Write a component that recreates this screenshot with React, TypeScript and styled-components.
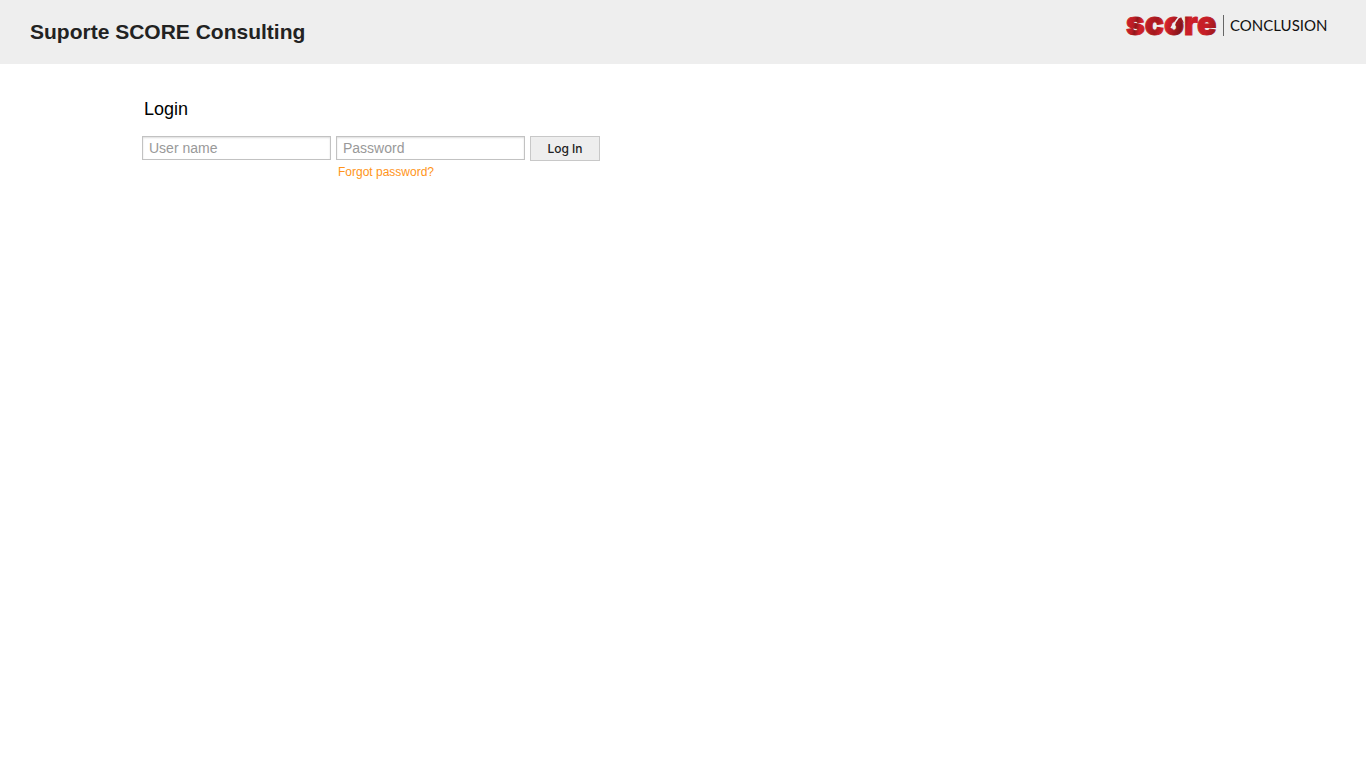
import React from "react";
import styled, { createGlobalStyle } from "styled-components";

const GlobalStyle = createGlobalStyle`
  * {
    box-sizing: border-box;
  }
  body {
    margin: 0;
    background: #fff;
    color: #000;
    font-family: "Liberation Sans", Arial, sans-serif;
  }
`;

const Header = styled.header`
  display: flex;
  justify-content: space-between;
  align-items: flex-start;
  height: 64px;
  padding: 0 36px 0 30px;
  background: #eee;
`;

const Title = styled.h1`
  margin: 0;
  padding-top: 18px;
  font-size: 21px;
  line-height: 28px;
  color: #222;
`;

const Logo = styled.svg`
  display: block;
  flex: none;
`;

const Main = styled.main`
  max-width: 1082px;
  margin: 0 auto;
  padding-top: 32px;
`;

const Heading = styled.h2`
  margin: 0 0 14px 2px;
  font-size: 18px;
  line-height: 26px;
  font-weight: 400;
`;

const Form = styled.form`
  display: flex;
  align-items: flex-start;
  gap: 5px;
`;

const Field = styled.div`
  display: flex;
  flex-direction: column;
  align-items: flex-start;
  gap: 4px;
`;

const TextInput = styled.input`
  width: 189px;
  height: 24px;
  padding: 0 6px;
  border: 1px solid #c2c2c2;
  border-radius: 0;
  background: #fff;
  box-shadow: inset 0 1px 2px #ddd;
  font: 14px "Liberation Sans", Arial, sans-serif;
  &::placeholder {
    color: #999;
    opacity: 1;
  }
`;

const ForgotLink = styled.a`
  margin-left: 2px;
  font-size: 12px;
  line-height: 16px;
  color: #ff9419;
  text-decoration: none;
`;

const SubmitButton = styled.button`
  width: 70px;
  height: 25px;
  padding: 0;
  border: 1px solid #c8c8c8;
  border-radius: 0;
  background: #eee;
  color: #222;
  font: 500 12px Inter, sans-serif;
`;

function ScoreLogo() {
  return (
    <Logo width="206" height="48" viewBox="0 0 206 48" role="img" aria-label="Score Conclusion">
      <defs>
        <linearGradient id="red" gradientUnits="userSpaceOnUse" x1="2" y1="15" x2="92" y2="35">
          <stop offset="0" stopColor="#d71f2b" />
          <stop offset="0.1" stopColor="#b81c24" />
          <stop offset="0.13" stopColor="#8f171b" />
          <stop offset="0.18" stopColor="#d2202a" />
          <stop offset="0.34" stopColor="#a3191e" />
          <stop offset="0.44" stopColor="#da202c" />
          <stop offset="0.61" stopColor="#84151a" />
          <stop offset="0.68" stopColor="#cc1f29" />
          <stop offset="0.88" stopColor="#c51e27" />
          <stop offset="1" stopColor="#96171c" />
        </linearGradient>
      </defs>
      <text
        x="2"
        y="35"
        fontFamily="Inter, sans-serif"
        fontWeight="900"
        fontSize="32"
        fill="url(#red)"
        stroke="url(#red)"
        strokeWidth="1"
      >
        score
      </text>
      <path d="M47 28 L57 14" stroke="#eee" strokeWidth="1.5" />
      <path d="M51 25 L57 17 L60 23 L57 21 L53 27 Z" fill="#9b181d" />
      <path d="M99.500 15 V36" stroke="#666" strokeWidth="1" />
      <text x="106" y="31" fontFamily="Lato, sans-serif" fontSize="15" fill="#111">
        CONCLUSION
      </text>
    </Logo>
  );
}

export default function App() {
  return (
    <>
      <GlobalStyle />
      <Header>
        <Title>Suporte SCORE Consulting</Title>
        <ScoreLogo />
      </Header>
      <Main>
        <Heading>Login</Heading>
        <Form onSubmit={(e) => e.preventDefault()}>
          <Field>
            <TextInput type="text" name="username" placeholder="User name" aria-label="User name" />
          </Field>
          <Field>
            <TextInput type="password" name="password" placeholder="Password" aria-label="Password" />
            <ForgotLink href="#forgot">Forgot password?</ForgotLink>
          </Field>
          <SubmitButton type="submit">Log In</SubmitButton>
        </Form>
      </Main>
    </>
  );
}
